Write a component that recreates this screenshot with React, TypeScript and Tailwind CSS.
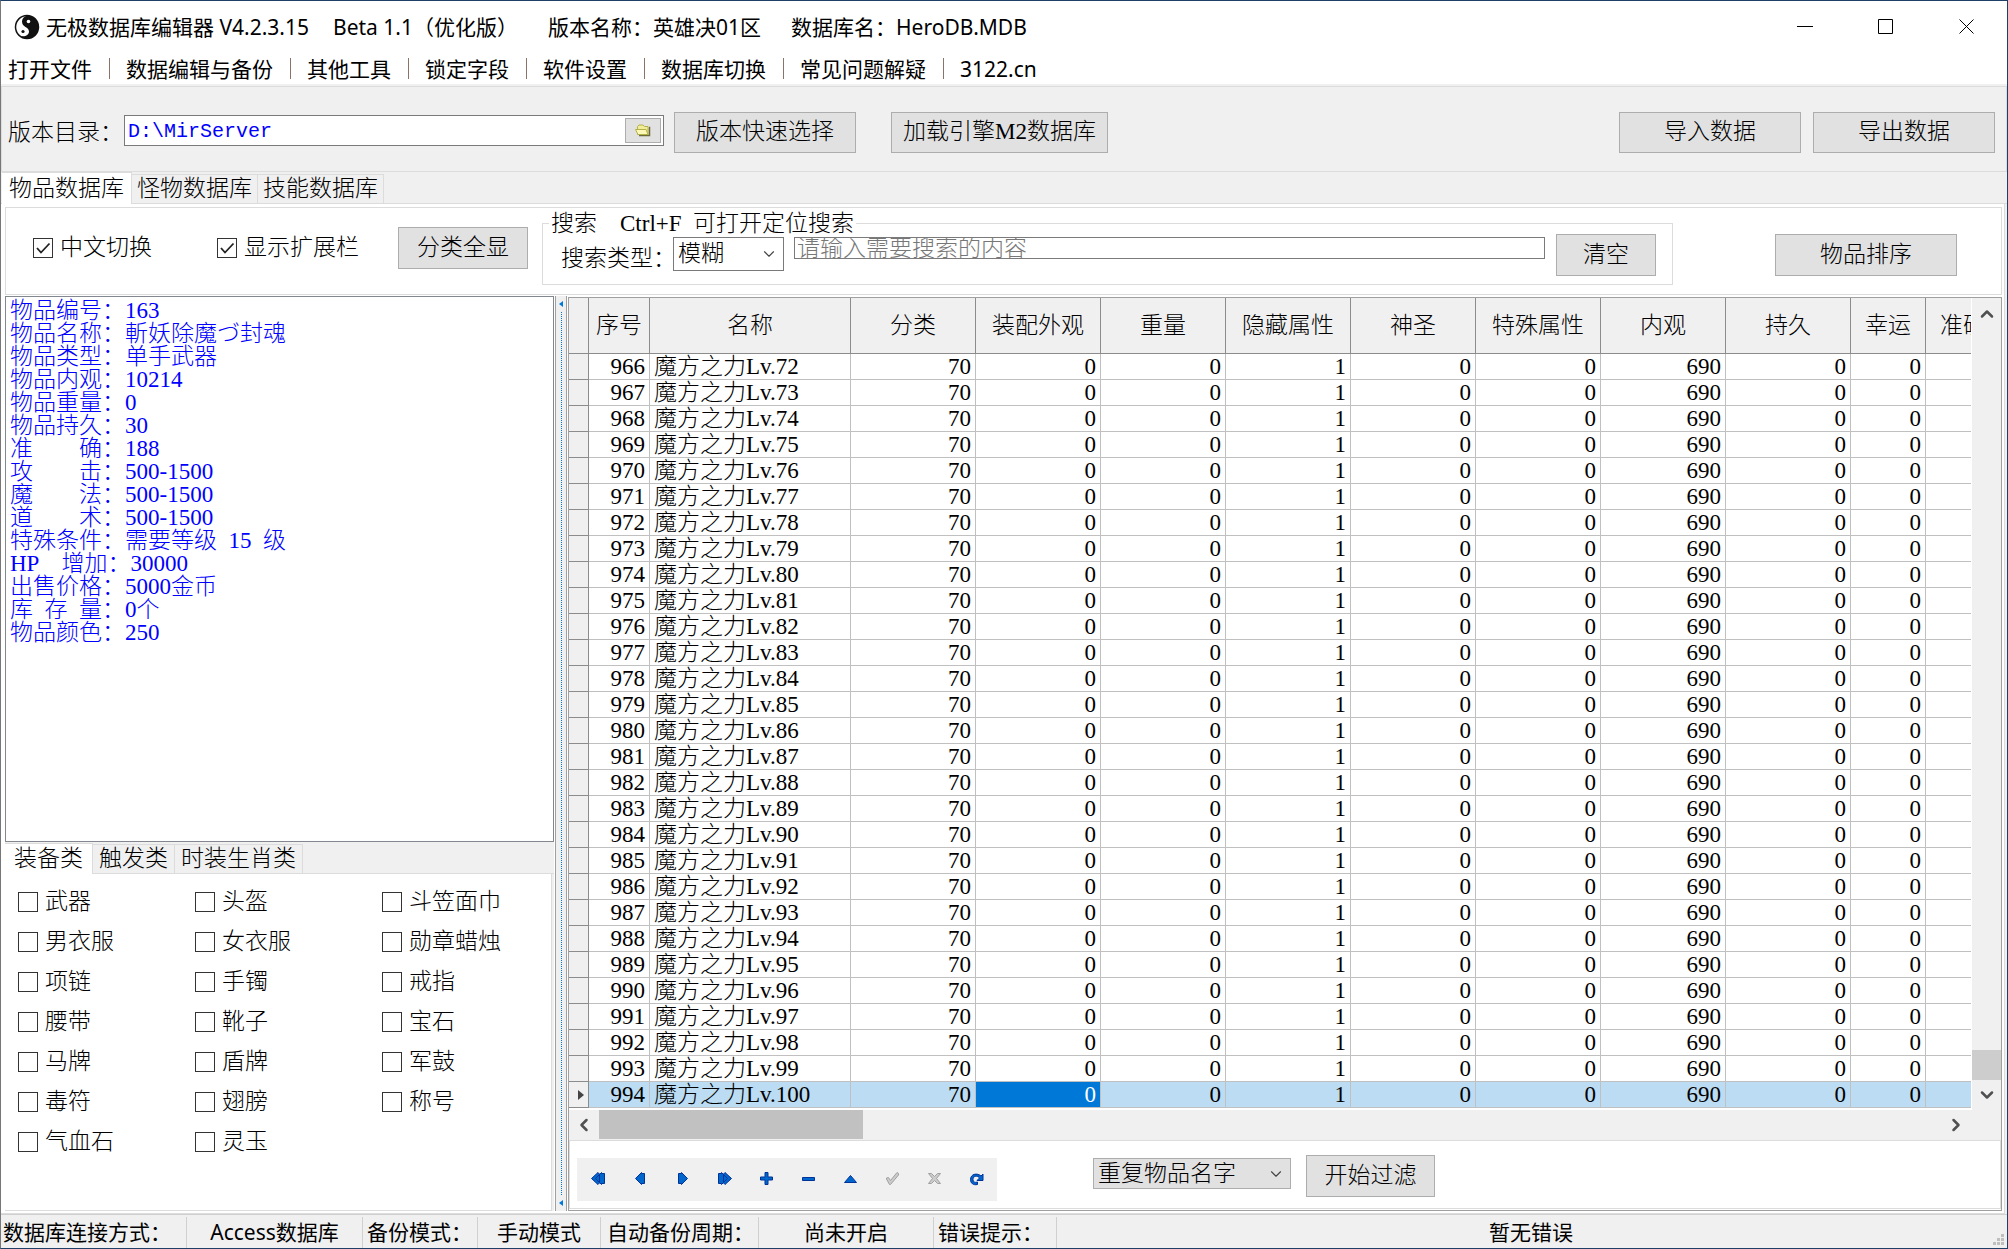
import { useState } from "react";
import { ChevronDown, ChevronLeft, ChevronRight, ChevronUp } from "lucide-react";
import clsx from "clsx";

const MENU = ["打开文件", "数据编辑与备份", "其他工具", "锁定字段", "软件设置", "数据库切换", "常见问题解疑", "3122.cn"];

const DB_TABS = ["物品数据库", "怪物数据库", "技能数据库"];

const CATEGORY_TABS = ["装备类", "触发类", "时装生肖类"];

const CATEGORIES = [
	["武器", "男衣服", "项链", "腰带", "马牌", "毒符", "气血石"],
	["头盔", "女衣服", "手镯", "靴子", "盾牌", "翅膀", "灵玉"],
	["斗笠面巾", "勋章蜡烛", "戒指", "宝石", "军鼓", "称号"],
];

// \u2002 is half an em, \u3000 a full one, so the labels stay aligned
const ITEM_INFO = [
	"物品编号：163",
	"物品名称：斬妖除魔づ封魂",
	"物品类型：单手武器",
	"物品内观：10214",
	"物品重量：0",
	"物品持久：30",
	"准\u3000\u3000确：188",
	"攻\u3000\u3000击：500-1500",
	"魔\u3000\u3000法：500-1500",
	"道\u3000\u3000术：500-1500",
	"特殊条件：需要等级\u200215\u2002级",
	"HP\u3000增加：30000",
	"出售价格：5000金币",
	"库\u2002存\u2002量：0个",
	"物品颜色：250",
];

const COLUMNS = [
	{ title: "序号", width: "w-[61px]" },
	{ title: "名称", width: "w-[201px]" },
	{ title: "分类", width: "w-[125px]" },
	{ title: "装配外观", width: "w-[125px]" },
	{ title: "重量", width: "w-[125px]" },
	{ title: "隐藏属性", width: "w-[125px]" },
	{ title: "神圣", width: "w-[125px]" },
	{ title: "特殊属性", width: "w-[125px]" },
	{ title: "内观", width: "w-[125px]" },
	{ title: "持久", width: "w-[125px]" },
	{ title: "幸运", width: "w-[75px]" },
	{ title: "准确", width: "w-[75px]" },
];

const ROWS = Array.from({ length: 29 }, (_, i) => ({
	id: 966 + i,
	name: `魔方之力Lv.${72 + i}`,
	values: [70, 0, 0, 1, 0, 0, 690, 0, 0],
}));

const SELECTED_ID = 994;

const STATUS = [
	{ text: "数据库连接方式：", cell: "w-[186px] pl-0.5" },
	{ text: "Access数据库", cell: "w-[176px] text-center" },
	{ text: "备份模式：", cell: "w-[115px] pl-1" },
	{ text: "手动模式", cell: "w-[123px] text-center" },
	{ text: "自动备份周期：", cell: "w-[158px] pl-1.5" },
	{ text: "尚未开启", cell: "w-[175px] text-center" },
	{ text: "错误提示：", cell: "w-[123px] pl-1" },
];

const NAV_ICONS: { label: string; path: string; disabled?: boolean }[] = [
	{ label: "首条", path: "M7 1.5.5 7.5 7 13.5 8.5 12V3ZM10.5 1.5 4.5 7.5 10.5 13.5V12.5H13.5V2.5H10.5Z" },
	{ label: "上一条", path: "M8.5 1.5 2.5 7.5 8.5 13.5V12.5H11.5V2.5H8.5Z" },
	{ label: "下一条", path: "M6.5 1.5 12.5 7.5 6.5 13.5V12.5H3.5V2.5H6.5Z" },
	{ label: "末条", path: "M8 1.5 14.5 7.5 8 13.5 6.5 12V3ZM4.5 1.5 10.5 7.5 4.5 13.5V12.5H1.5V2.5H4.5Z" },
	{ label: "新增", path: "M6 1.5H9V6H13.5V9H9V13.5H6V9H1.5V6H6Z" },
	{ label: "删除", path: "M1.5 6.5H13.5V9.5H1.5Z" },
	{ label: "编辑", path: "M7.5 4.5 13.5 11.5H1.5Z" },
	{ label: "提交", path: "M1.5 8V7L3.5 6.5 5.5 9.5 12 1.5 13.5 2.5V4L5.5 13.5H4.5Z", disabled: true },
	{ label: "取消", path: "M1.5 2.5H4.5L7.5 5.5 10.5 2.5H13.5L9.5 7.5 13.5 12.5H10.5L7.5 9.5 4.5 12.5H1.5L5.5 7.5Z", disabled: true },
	{ label: "刷新", path: "M14 3V9.5H8L10.5 7C8 4 4 5 4 8.5 4 11 6 12 8.5 11V13.5C4 14.5 1.5 12 1.5 8.5 1.5 3 8 1.5 12 5Z" },
];

function TaijiIcon() {
	return (
		<svg viewBox="0 0 26 26" className="size-[26px]" aria-hidden="true">
			<circle cx="13" cy="13" r="11.5" fill="#fff" stroke="#111" strokeWidth="1.5" />
			<path d="M13 1.5a11.5 11.5 0 0 1 0 23c-3 0-5-1-6-2.500 4 1 8-1 8-4.500 0-5-7-4-7-10 0-3 2-5 5-6Z" fill="#111" />
			<circle cx="14.5" cy="7.5" r="1.8" fill="#fff" />
			<circle cx="9" cy="17.5" r="1.6" fill="#111" />
		</svg>
	);
}

function FolderIcon() {
	return (
		<svg viewBox="0 0 16 14" className="h-3.5 w-4" aria-hidden="true">
			<path d="M4 12.5h10.5V4.5H14" fill="none" stroke="#6b6b3a" strokeWidth="1.5" />
			<path d="M2.5 11.5V3.5L4 2h4l1.5 1.5H13v8Z" fill="#f0ec9a" stroke="#b5b04a" />
			<path d="M.5 6.5h10.5l2 5H3Z" fill="#fbf8b8" stroke="#b5b04a" />
		</svg>
	);
}

function PushButton({ children, className }: { children: React.ReactNode; className?: string }) {
	return (
		<button type="button" className={clsx("shrink-0 border border-[#adadad] bg-[#e1e1e1] text-center", className)}>
			{children}
		</button>
	);
}

function Check({ label, checked }: { label: string; checked?: boolean }) {
	return (
		<label className="flex items-center gap-[7px]">
			<span className="relative flex">
				<input type="checkbox" defaultChecked={checked} className="peer size-5 appearance-none border border-[#333] bg-white" />
				<svg viewBox="0 0 20 20" className="pointer-events-none absolute inset-0 hidden size-5 peer-checked:block" aria-hidden="true">
					<path d="M4 10l4 4.5L16.5 5.5" fill="none" stroke="#222" strokeWidth="1.8" />
				</svg>
			</span>
			<span className="leading-6">{label}</span>
		</label>
	);
}

interface TabsProps {
	items: string[];
	className: string;
	activeClass: string;
	idleClass: string;
}

function Tabs({ items, className, activeClass, idleClass }: TabsProps) {
	const [active, setActive] = useState(0);

	return (
		<div role="tablist" className={clsx("flex shrink-0 items-end border-b border-[#dcdcdc]", className)}>
			{items.map((item, i) => (
				<button
					key={item}
					type="button"
					role="tab"
					aria-selected={i === active}
					onClick={() => setActive(i)}
					className={clsx("border-t border-r border-[#dcdcdc] leading-6", i === active ? activeClass : idleClass)}
				>
					{item}
				</button>
			))}
		</div>
	);
}

function Combo({ label, options, className }: { label: string; options: string[]; className?: string }) {
	return (
		<span className="relative flex">
			<select aria-label={label} className={clsx("appearance-none border px-1 leading-6", className)}>
				{options.map((option) => (
					<option key={option}>{option}</option>
				))}
			</select>
			<ChevronDown className="pointer-events-none absolute top-1/2 right-1.5 size-[18px] -translate-y-1/2 text-[#444]" strokeWidth={1.5} />
		</span>
	);
}

function TitleBar() {
	return (
		<header className="flex h-[52px] shrink-0 items-center bg-white pl-[13px] font-['Noto_Sans','Noto_Sans_CJK_SC',sans-serif] text-[21px] font-normal">
			<TaijiIcon />
			<h1 className="flex flex-1 gap-6 pl-1.5 whitespace-nowrap">
				<span>无极数据库编辑器 V4.2.3.15</span>
				<span>Beta 1.1（优化版）</span>
				<span className="pl-1.5">版本名称：英雄决01区</span>
				<span className="pl-1.5">数据库名：HeroDB.MDB</span>
			</h1>
			<button type="button" aria-label="最小化" className="grid h-full w-[81px] place-items-center">
				<svg viewBox="0 0 16 16" className="size-4"><path d="M0 7.5h16" stroke="#000" /></svg>
			</button>
			<button type="button" aria-label="最大化" className="grid h-full w-[81px] place-items-center">
				<svg viewBox="0 0 16 16" className="size-4"><path d="M.5.5h14v14H.5Z" fill="none" stroke="#000" /></svg>
			</button>
			<button type="button" aria-label="关闭" className="grid h-full w-[81px] place-items-center">
				<svg viewBox="0 0 16 16" className="size-4"><path d="m.5.5 14 14m0-14-14 14" fill="none" stroke="#000" /></svg>
			</button>
		</header>
	);
}

function MenuBar() {
	return (
		<nav className="flex h-[31px] shrink-0 items-center bg-white pl-[7px] font-['Noto_Sans','Noto_Sans_CJK_SC',sans-serif] text-[21px] font-normal">
			{MENU.map((item, i) => (
				<div key={item} className="flex items-center whitespace-nowrap">
					{i > 0 && <span className="mr-4 ml-[17px] h-[21px] w-px bg-[#8a7468]" />}
					<button type="button" className="leading-6">{item}</button>
				</div>
			))}
		</nav>
	);
}

function PathBar() {
	return (
		<section className="mt-0.5 flex h-[86px] shrink-0 items-center border border-[#dcdcdc] pt-1.5 pr-[11px] pl-1.5">
			<label htmlFor="path" className="w-[116px] pt-0.5 whitespace-nowrap">版本目录：</label>
			<div className="mb-1 flex h-[31px] w-[540px] items-center border border-[#7a7a7a] bg-white p-0.5">
				<input
					id="path"
					defaultValue="D:\MirServer"
					className="h-full min-w-0 flex-1 px-px pt-0.5 font-['Liberation_Mono',monospace] text-[20px] text-[#0000ff] outline-none"
				/>
				<button type="button" aria-label="浏览" className="grid h-[25px] w-9 place-items-center border border-[#adadad] bg-[#e1e1e1]">
					<FolderIcon />
				</button>
			</div>
			<PushButton className="ml-2.5 h-[41px] w-[182px]">版本快速选择</PushButton>
			<PushButton className="ml-[35px] h-[41px] w-[217px]">加载引擎M2数据库</PushButton>
			<PushButton className="ml-auto h-[41px] w-[182px]">导入数据</PushButton>
			<PushButton className="ml-3 h-[41px] w-[182px]">导出数据</PushButton>
		</section>
	);
}

function Toolbar() {
	return (
		<section className="flex h-[88px] shrink-0 items-start border border-[#dcdcdc] pr-11 pl-[27px]">
			<div className="mt-7 flex w-[184px]"><Check label="中文切换" checked /></div>
			<div className="mt-7 flex w-[181px]"><Check label="显示扩展栏" checked /></div>
			<PushButton className="mt-[19px] h-[42px] w-[130px]">分类全显</PushButton>
			<fieldset className="relative mt-[15px] ml-3.5 flex h-[62px] min-w-0 flex-1 items-start border border-[#dcdcdc] pl-[18px]">
				<legend className="absolute -top-3 left-1.5 bg-white px-0.5 leading-6 whitespace-pre">{"搜索\u2002\u2002Ctrl+F\u2002可打开定位搜索"}</legend>
				<span className="mt-[23px] w-[112px] leading-6 whitespace-nowrap">搜索类型：</span>
				<div className="mt-[13px] flex"><Combo label="搜索类型" options={["模糊", "精确"]} className="h-[34px] w-[111px] border-[#7a7a7a] bg-white" /></div>
				<input
					aria-label="搜索内容"
					placeholder="请输入需要搜索的内容"
					className="mt-[13px] ml-2.5 h-[22px] min-w-0 flex-1 border border-[#7a7a7a] bg-white px-0.5 pt-0.5 leading-6 placeholder:text-[#777]"
				/>
				<PushButton className="mt-2.5 mr-4 ml-[11px] h-[42px] w-[100px]">清空</PushButton>
			</fieldset>
			<PushButton className="mt-[26px] ml-[102px] h-[42px] w-[182px]">物品排序</PushButton>
		</section>
	);
}

function ItemPanel() {
	return (
		<aside className="flex w-[549px] shrink-0 flex-col">
			<div className="flex-1 border border-[#828790] bg-white px-1 pt-0.5 text-[#0000ff]">
				{ITEM_INFO.map((line) => (
					<p key={line} className="leading-[23px] whitespace-pre">{line}</p>
				))}
			</div>
			<div className="flex h-[369px] flex-col bg-[#f0f0f0]">
				<Tabs
					items={CATEGORY_TABS}
					className="h-8"
					activeClass="-mb-px h-[31px] bg-white px-[9px]"
					idleClass="h-[29px] bg-[#f0f0f0] px-1.5"
				/>
				<div className="mr-0.5 flex flex-1 items-start border-r border-b border-[#dcdcdc] bg-white pt-4 pl-[13px]">
					{CATEGORIES.map((group, i) => (
						<div key={i} className={clsx("flex shrink-0 flex-col gap-4", i === 0 ? "w-[177px]" : i === 1 ? "w-[187px]" : "w-[140px]")}>
							{group.map((name) => (
								<Check key={name} label={name} />
							))}
						</div>
					))}
				</div>
			</div>
		</aside>
	);
}

function Splitter() {
	return (
		<div className="ml-px flex w-3 shrink-0 flex-col items-center border-x border-[#a0a0a0] bg-[#f0f0f0] py-1">
			<svg viewBox="0 0 4 8" className="h-2 w-1"><path d="M4 1v6L0 4Z" fill="#0078d7" /></svg>
			<div className="my-1 w-px flex-1 border-l border-dotted border-[#0078d7]" />
			<svg viewBox="0 0 4 8" className="h-2 w-1"><path d="M4 1v6L0 4Z" fill="#0078d7" /></svg>
		</div>
	);
}

function ItemGrid() {
	return (
		<div className="flex min-h-0 flex-1">
			<div className="min-w-0 flex-1 overflow-hidden border-r border-white bg-white">
				<table className="w-[1432px] table-fixed border-separate border-spacing-0">
					<thead>
						<tr className="h-14 bg-[#f0f0f0]">
							<th className="w-5 border-r border-b border-[#8c8c8c]" />
							{COLUMNS.map((col) => (
								<th key={col.title} className={clsx("border-r border-b border-[#8c8c8c] p-0 font-light", col.width)}>
									{col.title}
								</th>
							))}
						</tr>
					</thead>
					<tbody>
						{ROWS.map((row) => {
							const selected = row.id === SELECTED_ID;
							return (
								<tr key={row.id} className={clsx("h-[26px] leading-[25px]", selected && "bg-[#bbdcf3]")}>
									<td className="border-r border-b border-[#8c8c8c] bg-[#f0f0f0] p-0">
										{selected && (
											<svg viewBox="0 0 6 10" className="mr-1 ml-auto h-2.5 w-1.5"><path d="M0 0 6 5 0 10Z" fill="#444" /></svg>
										)}
									</td>
									<td className="border-r border-b border-[#c0c0c0] px-1 py-0 text-right">{row.id}</td>
									<td className="border-r border-b border-[#c0c0c0] px-1 py-0 whitespace-nowrap">{row.name}</td>
									{row.values.map((value, i) => (
										<td
											key={i}
											className={clsx(
												"border-r border-b border-[#c0c0c0] px-1 py-0 text-right",
												selected && i === 1 && "bg-[#0078d7] text-white",
											)}
										>
											{value}
										</td>
									))}
									<td className="border-r border-b border-[#c0c0c0] p-0" />
								</tr>
							);
						})}
					</tbody>
				</table>
			</div>
			<div className="flex w-[29px] shrink-0 flex-col items-center bg-[#f0f0f0] text-[#505050]">
				<button type="button" aria-label="向上滚动" className="grid h-8 place-items-center"><ChevronUp className="size-5" strokeWidth={3} /></button>
				<div className="flex-1" />
				<div className="h-[30px] w-full bg-[#cdcdcd]" />
				<button type="button" aria-label="向下滚动" className="grid h-[30px] place-items-center"><ChevronDown className="size-5" strokeWidth={3} /></button>
			</div>
		</div>
	);
}

function HorizontalScroll() {
	return (
		<div className="flex h-[30px] shrink-0 items-center bg-[#f0f0f0] pb-px text-[#505050]">
			<button type="button" aria-label="向左滚动" className="grid w-[30px] place-items-center"><ChevronLeft className="size-5" strokeWidth={3} /></button>
			<div className="h-full w-[264px] bg-[#c1c1c1]" />
			<div className="flex-1" />
			<button type="button" aria-label="向右滚动" className="mr-[30px] grid w-[30px] place-items-center"><ChevronRight className="size-5" strokeWidth={3} /></button>
		</div>
	);
}

function Navigator() {
	return (
		<div className="mb-px flex h-[69px] shrink-0 items-start border border-[#dcdcdc] bg-white pt-3.5 pl-[7px]">
			<div className="mt-[3px] flex h-[43px] bg-[#f0f0f0]">
				{NAV_ICONS.map((icon) => (
					<button key={icon.label} type="button" aria-label={icon.label} disabled={icon.disabled} className="grid w-[42px] place-items-center pb-0.5">
						<svg viewBox="0 0 15 15" className="size-[15px]">
							<path
								d={icon.path}
								fill={icon.disabled ? "#cccccc" : "#0066cc"}
								stroke={icon.disabled ? "#a0a0a0" : "#003399"}
							/>
						</svg>
					</button>
				))}
			</div>
			<div className="mt-[3px] ml-24 flex">
				<Combo label="过滤条件" options={["重复物品名字"]} className="h-[31px] w-[198px] border-[#adadad] bg-[#e1e1e1]" />
			</div>
			<PushButton className="ml-[15px] h-[42px] w-[129px]">开始过滤</PushButton>
		</div>
	);
}

function StatusBar() {
	return (
		<footer className="flex h-[34px] shrink-0 items-stretch border-t border-[#d0d0d0] bg-[#f0f0f0] pt-0.5 font-['Noto_Sans','Noto_Sans_CJK_SC',sans-serif] text-[21px] leading-[30px] font-normal">
			{STATUS.map((item) => (
				<div key={item.text} className={clsx("shrink-0 border-r border-[#d0d0d0] whitespace-nowrap", item.cell)}>
					{item.text}
				</div>
			))}
			<div className="flex-1 text-center">暂无错误</div>
			<svg viewBox="0 0 12 12" className="mr-0.5 mb-0.5 -ml-3 size-3 self-end" fill="#bfbfbf">
				<path d="M8 0h3v3H8ZM4 4h3v3H4ZM8 4h3v3H8ZM0 8h3v3H0ZM4 8h3v3H4ZM8 8h3v3H8Z" />
			</svg>
		</footer>
	);
}

export default function App() {
	return (
		<div className="flex h-screen w-full flex-col overflow-hidden border-t border-r border-b border-l border-[#1e3f66] border-l-[#777] bg-[#f0f0f0] font-['Liberation_Serif','Noto_Sans_CJK_SC',serif] text-[23px] leading-6 font-light text-black">
			<TitleBar />
			<MenuBar />
			<PathBar />
			<Tabs
				items={DB_TABS}
				className="h-8 pl-px"
				activeClass="-mb-px h-8 bg-white px-[7px]"
				idleClass="h-[29px] bg-[#f0f0f0] px-[5px]"
			/>
			<main className="mr-0.5 flex min-h-0 flex-1 flex-col border-r border-b border-[#dcdcdc] bg-white pt-[3px] pr-0.5 pb-0.5 pl-1">
				<Toolbar />
				<div className="mt-px flex min-h-0 flex-1">
					<ItemPanel />
					<Splitter />
					<div className="mt-px ml-px flex min-w-0 flex-1 flex-col border border-[#a0a0a0]">
						<ItemGrid />
						<HorizontalScroll />
						<Navigator />
					</div>
				</div>
			</main>
			<StatusBar />
		</div>
	);
}
